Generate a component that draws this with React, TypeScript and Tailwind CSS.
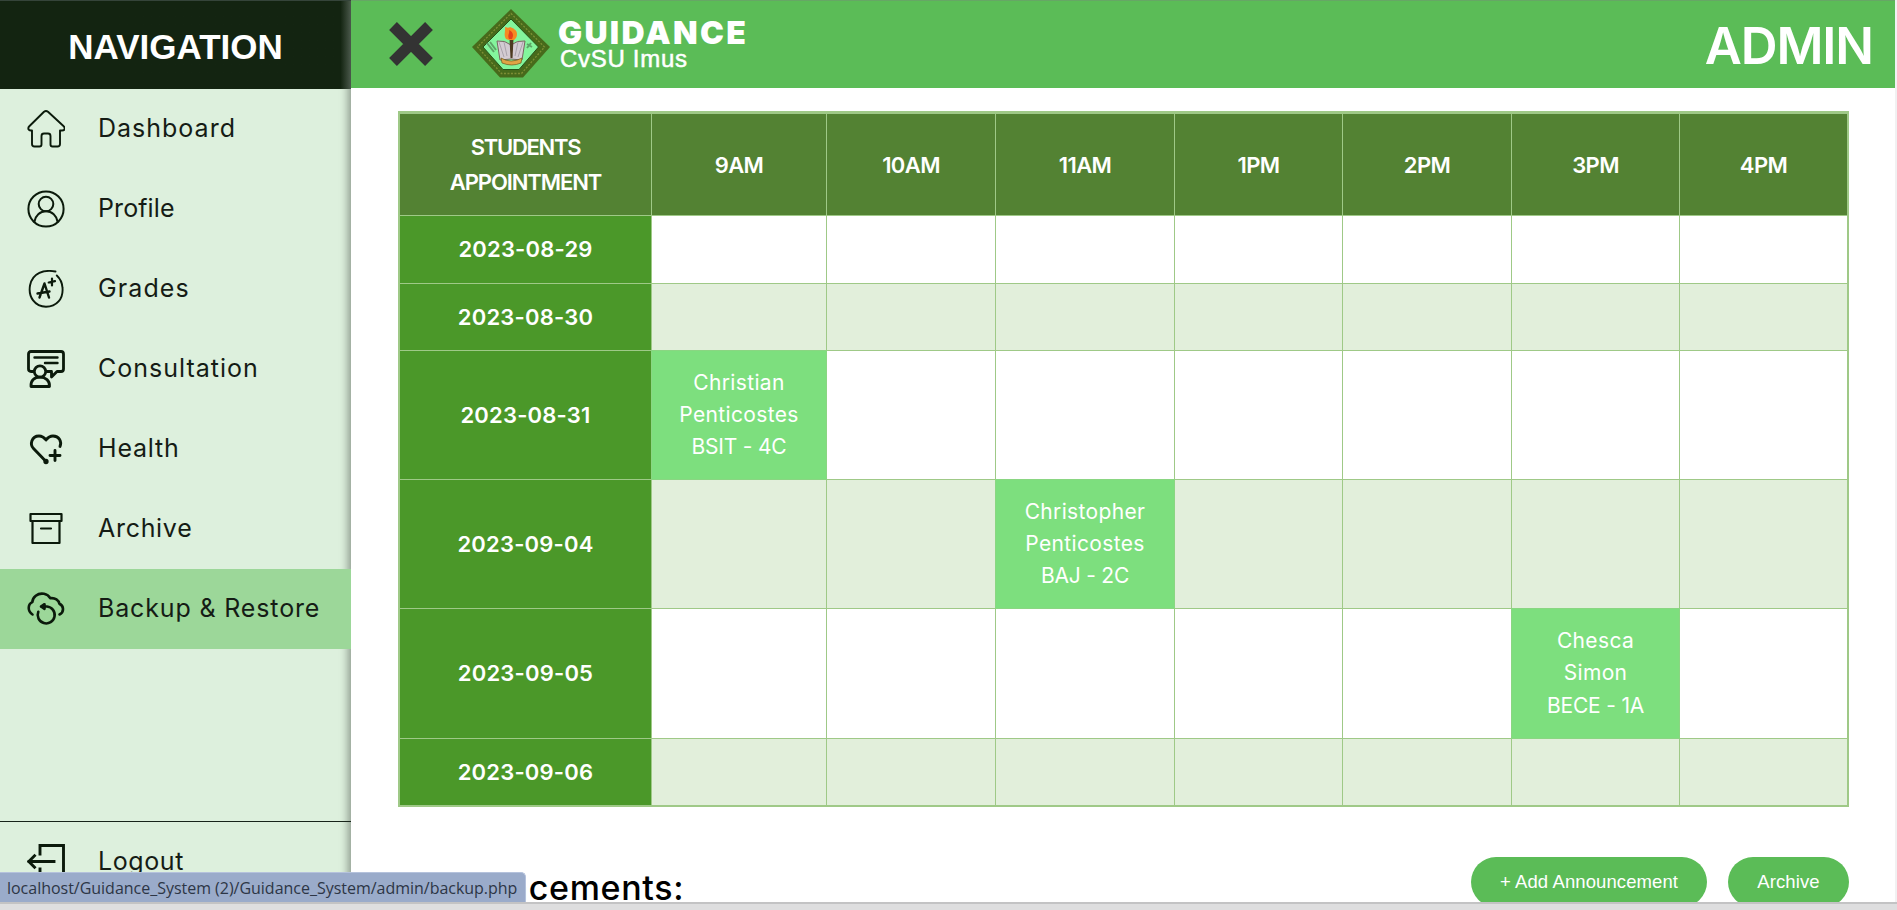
import type { ReactNode } from 'react';
import clsx from 'clsx';

function Icon({ children, width = 1.2 }: { children: ReactNode; width?: number }) {
  return (
    <svg
      className="h-[38px] w-[38px] shrink-0"
      viewBox="0 0 38 38"
      fill="none"
      stroke="#0b1a0b"
      strokeWidth={width}
      strokeLinecap="round"
      strokeLinejoin="round"
    >
      {children}
    </svg>
  );
}

const HomeIcon = () => (
  <Icon width={1.9}>
    <path d="M5 20.500V34q0 2.500 2.500 2.500h5q2 0 2-2V26q0-2.500 2.500-2.500h4q2.500 0 2.500 2.500v8.500q0 2 2 2h5q2.500 0 2.500-2.500V20.500h2q2.700 0 2.700-2.200q0-1-1-2L21 1.800q-2-1.500-4 0L2.300 16.300q-1 1-1 2q0 2.200 2.700 2.200z" />
  </Icon>
);

const ProfileIcon = () => (
  <Icon width={2}>
    <circle cx="19" cy="19" r="17.600" />
    <circle cx="19" cy="14" r="7.300" />
    <path d="M7.300 32c1-6.500 5.700-10.700 11.700-10.700S29.700 25.500 30.700 32" />
  </Icon>
);

const GradesIcon = () => (
  <Icon width={1.9}>
    <path d="M28.500 1.500C17-.5 5.500 2.500 3 15.500 1 27 8 36.700 19 36.700c10.500 0 17.500-7.700 16.500-19C35.200 13 33 8.500 29.800 5.500" />
    <path d="M12.500 27.500 17.500 13.500l4.500 14M10.500 23.500l12-2" strokeWidth="2.400" />
    <path d="M25 8.500v7M21.700 12.500l6.300-1.300" strokeWidth="2.200" />
  </Icon>
);

const ConsultationIcon = () => (
  <Icon width={2.800}>
    <path d="M6 21.500H4q-2.500 0-2.500-2.500V4Q1.500 1.500 4 1.500h30q2.500 0 2.500 2.500v15q0 2.500-2.500 2.500h-4L24.500 27v-5.500H20" />
    <path d="M7.500 7.500h23M18 13h12.500" strokeWidth="2.400" />
    <circle cx="13" cy="21.500" r="5.700" />
    <path d="M4 36.500c-.5-6 3.500-9.300 9-9.300s10 3.300 9.500 9.300z" />
  </Icon>
);

const HealthIcon = () => (
  <Icon width={2.900}>
    <path d="M19.500 32 6.500 18.500C2.500 14.500 4.500 6 12 6c3.500 0 5.500 2 7 4 1.500-2 3.500-4 7-4 6 0 9 5 7 10.500M28 20.500v10M23 25.500h10" />
    <circle cx="19" cy="31.500" r="1.200" fill="#0b1a0b" />
  </Icon>
);

const ArchiveIcon = () => (
  <Icon width={2.200}>
    <path d="M3.500 4h31v7h-31zM5.500 11v22h27V11M14 18.500h10" />
  </Icon>
);

const BackupIcon = () => (
  <Icon width={2.600}>
    <path d="M5.500 24.500c-5-3-5-10-.2-12.300C5.500 7.500 10.500 2.500 17 3.800c2.500.5 5 2.200 6.200 4.400 5-.7 8.500 2 9.200 5.600 4.600 2 5 8.500.1 10.700" />
    <path d="M14.500 16.500h5.500a8.500 8.500 0 1 1-8.700 5.300" />
    <path d="m17.500 14.200-3.500 2.300 3.500 2.300z" fill="#0b1a0b" />
  </Icon>
);

const LogoutIcon = () => (
  <Icon width={2.900}>
    <path d="M13 11V2.500h23.500v33H13V26M27 18.500H2M7.500 12.800 1.800 18.500l5.700 5.700" strokeLinecap="square" strokeLinejoin="miter" />
  </Icon>
);

const Crest = () => (
  <svg className="h-[72px] w-[80px]" viewBox="0 0 80 72">
    <path d="M40 1 79 39 52 69.500H29L1 39z" fill="#476a1b" />
    <path d="M40 5.500 73.500 39 50.500 65.500H30.500L6.500 39z" fill="none" stroke="#7d8f35" strokeWidth="1.300" strokeDasharray="2 1.500" />
    <path d="M40 11 67.500 39 48 61.500H32L12 39z" fill="#83f59c" stroke="#24531a" />
    <path d="m16 35 7 9M19 34l6 8M56 40l4-5M56 36l5 3" stroke="#5da467" strokeWidth="2" />
    <path d="M26 33q8-1 14 4 6-5 14-4l-3 19q-11-2-22 0z" fill="#d3cbd2" stroke="#76675f" />
    <path d="m28 34 5 15M33 34l3 14M52 34l-5 15M47 34l-3 14" stroke="#aaa3ac" />
    <path d="M30 50q10 6 21 0l-1 5q-9 4-19 0z" fill="#e0a444" stroke="#6f5a1d" strokeWidth=".7" />
    <path d="M38.500 31h4l-1 19h-2z" fill="#4c3a20" />
    <path d="M35 31c-3-5 0-8-1-12 3 1 4 1 5 0 3 1 7 3 7 7 0 3-1 4-3 6h-5z" fill="#f58a22" />
    <path d="M38 31c-2-4 1-5 0-9 4 2 5 5 3 9z" fill="#e5401a" />
  </svg>
);

const navItems = [
  { label: 'Dashboard', icon: <HomeIcon />, tracking: 'tracking-[1px]' },
  { label: 'Profile', icon: <ProfileIcon />, tracking: 'tracking-[0.1px]' },
  { label: 'Grades', icon: <GradesIcon />, tracking: 'tracking-[1.1px]' },
  { label: 'Consultation', icon: <ConsultationIcon />, tracking: 'tracking-[1px]' },
  { label: 'Health', icon: <HealthIcon />, tracking: 'tracking-[0.8px]' },
  { label: 'Archive', icon: <ArchiveIcon />, tracking: 'tracking-[0.7px]' },
  { label: 'Backup & Restore', icon: <BackupIcon />, tracking: 'tracking-[0.85px]', active: true },
];

const hours = ['9AM', '10AM', '11AM', '1PM', '2PM', '3PM', '4PM'];

type Booking = { hour: string; lines: string[] };
const days: { date: string; booking?: Booking }[] = [
  { date: '2023-08-29' },
  { date: '2023-08-30' },
  { date: '2023-08-31', booking: { hour: '9AM', lines: ['Christian', 'Penticostes', 'BSIT - 4C'] } },
  { date: '2023-09-04', booking: { hour: '11AM', lines: ['Christopher', 'Penticostes', 'BAJ - 2C'] } },
  { date: '2023-09-05', booking: { hour: '3PM', lines: ['Chesca', 'Simon', 'BECE - 1A'] } },
  { date: '2023-09-06' },
];

function NavRow({ label, icon, tracking, active }: { label: string; icon: ReactNode; tracking: string; active?: boolean }) {
  return (
    <a className={clsx('flex h-20 shrink-0 items-center gap-[33px] pl-[27px] text-[25px] text-[#151c15]', tracking, active && 'bg-[#9cd799]')}>
      {icon}
      <span className="whitespace-nowrap">{label}</span>
    </a>
  );
}

function Sidebar() {
  return (
    <aside className="flex w-[351px] shrink-0 flex-col bg-[#ddf0dd] shadow-[inset_-7px_0_8px_-4px_rgba(0,0,0,0.36)]">
      <div className="flex h-[89px] shrink-0 items-center justify-center border-t border-[#35443a] bg-linear-to-r from-[#132411] from-97% to-[#4b594c] pt-1 font-['Liberation_Sans',sans-serif] text-[35px] font-bold text-white">
        NAVIGATION
      </div>
      <nav className="flex flex-col">
        {navItems.map((item) => (
          <NavRow key={item.label} {...item} />
        ))}
      </nav>
      <div className="mt-[172px] border-t border-[#17241a]">
        <NavRow label="Logout" icon={<LogoutIcon />} tracking="tracking-[0.6px]" />
      </div>
    </aside>
  );
}

function Header() {
  return (
    <header className="flex h-[88px] shrink-0 items-center border-t border-[#66a765] bg-[#5bbc57] pr-[22px] pb-[2px] pl-[37px] text-white">
      <svg className="h-[46px] w-[46px]" viewBox="0 0 46 46" stroke="#333" strokeWidth="11">
        <path d="M5 5 41 41M41 5 5 41" />
      </svg>
      <div className="ml-[37px]">
        <Crest />
      </div>
      <div className="ml-[7px] flex flex-col">
        <span className="text-[32px] leading-[30px] font-black tracking-[2.3px]">GUIDANCE</span>
        <span className="ml-0.5 font-['Liberation_Sans',sans-serif] text-[24px] leading-[22px] tracking-[0.7px] [-webkit-text-stroke:0.5px_white]">
          CvSU Imus
        </span>
      </div>
      <span className="ml-auto pt-1 text-[51px] leading-none font-semibold tracking-[-1.100px]">ADMIN</span>
    </header>
  );
}

function Schedule() {
  return (
    <div className="ml-[47px] mt-[23px] grid w-[1451px] grid-cols-[251px_174px_168px_178px_167px_168px_167px_167px] grid-rows-[101px_67px_66px_128px_128px_129px_66px] gap-px bg-[#9fc987] px-[2px] pt-[3px] pb-[2px] text-[22px] font-semibold text-white">
      <div className="flex flex-col items-center justify-center bg-[#538233] leading-[35px]">
        <span className="tracking-[-1.3px]">STUDENTS</span>
        <span className="tracking-[-1.1px]">APPOINTMENT</span>
      </div>
      {hours.map((hour) => (
        <div key={hour} className="flex items-center justify-center bg-[#538233] pt-0.5 tracking-[-0.6px]">
          {hour}
        </div>
      ))}
      {days.map(({ date, booking }, row) => (
        <div key={date} className="contents">
          <div className="flex items-center justify-center bg-[#4b9829] tracking-[0.2px]">{date}</div>
          {hours.map((hour) => {
            const booked = booking?.hour === hour;
            return (
              <div
                key={hour}
                className={clsx(
                  'flex flex-col items-center justify-center text-[21px] leading-[32.300px] font-normal tracking-[0.350px]',
                  booked ? 'bg-[#7ddf7e] outline outline-[#7ddf7e]/60' : row % 2 ? 'bg-[#e2efdb]' : 'bg-white',
                )}
              >
                {booked &&
                  booking.lines.map((line) => (
                    <span key={line} className="last:tracking-[-0.200px]">
                      {line}
                    </span>
                  ))}
              </div>
            );
          })}
        </div>
      ))}
    </div>
  );
}

export default function App() {
  return (
    <div className="relative flex h-[910px] w-[1897px] flex-col overflow-hidden bg-white font-['Inter','Liberation_Sans',sans-serif]">
      <div className="flex h-[902px] overflow-hidden">
        <Sidebar />
        <main className="flex w-[1544px] shrink-0 flex-col">
          <Header />
          <Schedule />
          <div className="ml-[47px] mt-[50px] flex w-[1451px] shrink-0 items-start">
            <h2 className="pt-[7px] text-[34px] leading-[48px] font-medium tracking-[0.7px] whitespace-nowrap text-black">Announcements:</h2>
            <div className="ml-auto flex gap-[21px] font-['Liberation_Sans',sans-serif] text-[18.500px] text-white">
              <button className="h-[50px] w-[236px] rounded-full bg-[#5bbc57] tracking-[0.1px] whitespace-nowrap">+ Add Announcement</button>
              <button className="h-[50px] w-[121px] rounded-full bg-[#5bbc57] tracking-[0.1px]">Archive</button>
            </div>
          </div>
        </main>
        <div className="w-[2px] shrink-0 bg-[#f1f1f2]" />
      </div>
      <div className="h-2 border-t-2 border-[#c3c3c4] bg-[#dededf]" />
      <div className="absolute top-[872px] left-0 flex h-[30px] w-[526px] items-center rounded-tr-[5px] border-t border-r border-[#b5c2dc] bg-[#9aabca] pl-[7px] font-['Open_Sans','Noto_Sans',sans-serif] text-[16px] tracking-[-0.02px] whitespace-nowrap text-[#2d3646]">
        localhost/Guidance_System (2)/Guidance_System/admin/backup.php
      </div>
    </div>
  );
}
